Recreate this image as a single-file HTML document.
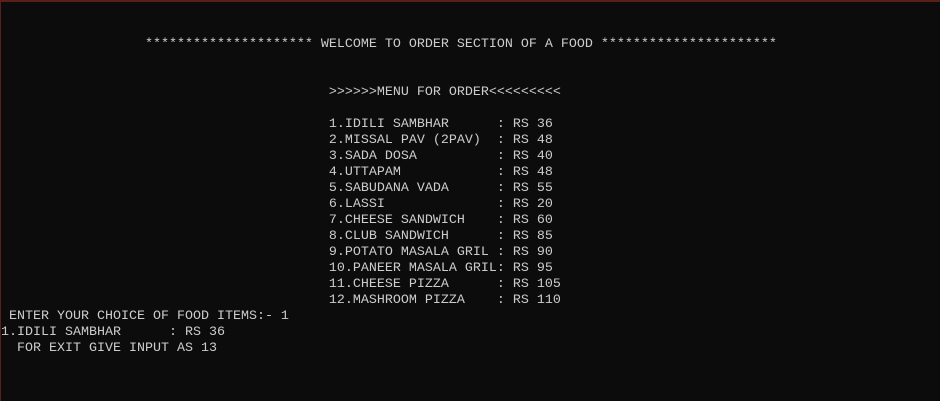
<!DOCTYPE html>
<html><head><meta charset="utf-8"><style>
html,body{margin:0;padding:0;}
body{width:940px;height:401px;background:#0c0c0c;overflow:hidden;position:relative;box-sizing:border-box;border-top:2px solid #5a1f17;border-left:1px solid #5a1f17;}
pre{position:absolute;left:0px;top:3px;margin:0;font-family:"Liberation Mono",monospace;font-size:13.33px;line-height:16px;color:#cccccc;}
</style></head><body><pre>


                  ********************* WELCOME TO ORDER SECTION OF A FOOD **********************


                                         &gt;&gt;&gt;&gt;&gt;&gt;MENU FOR ORDER&lt;&lt;&lt;&lt;&lt;&lt;&lt;&lt;&lt;

                                         1.IDILI SAMBHAR      : RS 36
                                         2.MISSAL PAV (2PAV)  : RS 48
                                         3.SADA DOSA          : RS 40
                                         4.UTTAPAM            : RS 48
                                         5.SABUDANA VADA      : RS 55
                                         6.LASSI              : RS 20
                                         7.CHEESE SANDWICH    : RS 60
                                         8.CLUB SANDWICH      : RS 85
                                         9.POTATO MASALA GRIL : RS 90
                                         10.PANEER MASALA GRIL: RS 95
                                         11.CHEESE PIZZA      : RS 105
                                         12.MASHROOM PIZZA    : RS 110
 ENTER YOUR CHOICE OF FOOD ITEMS:- 1
1.IDILI SAMBHAR      : RS 36
  FOR EXIT GIVE INPUT AS 13
</pre></body></html>
